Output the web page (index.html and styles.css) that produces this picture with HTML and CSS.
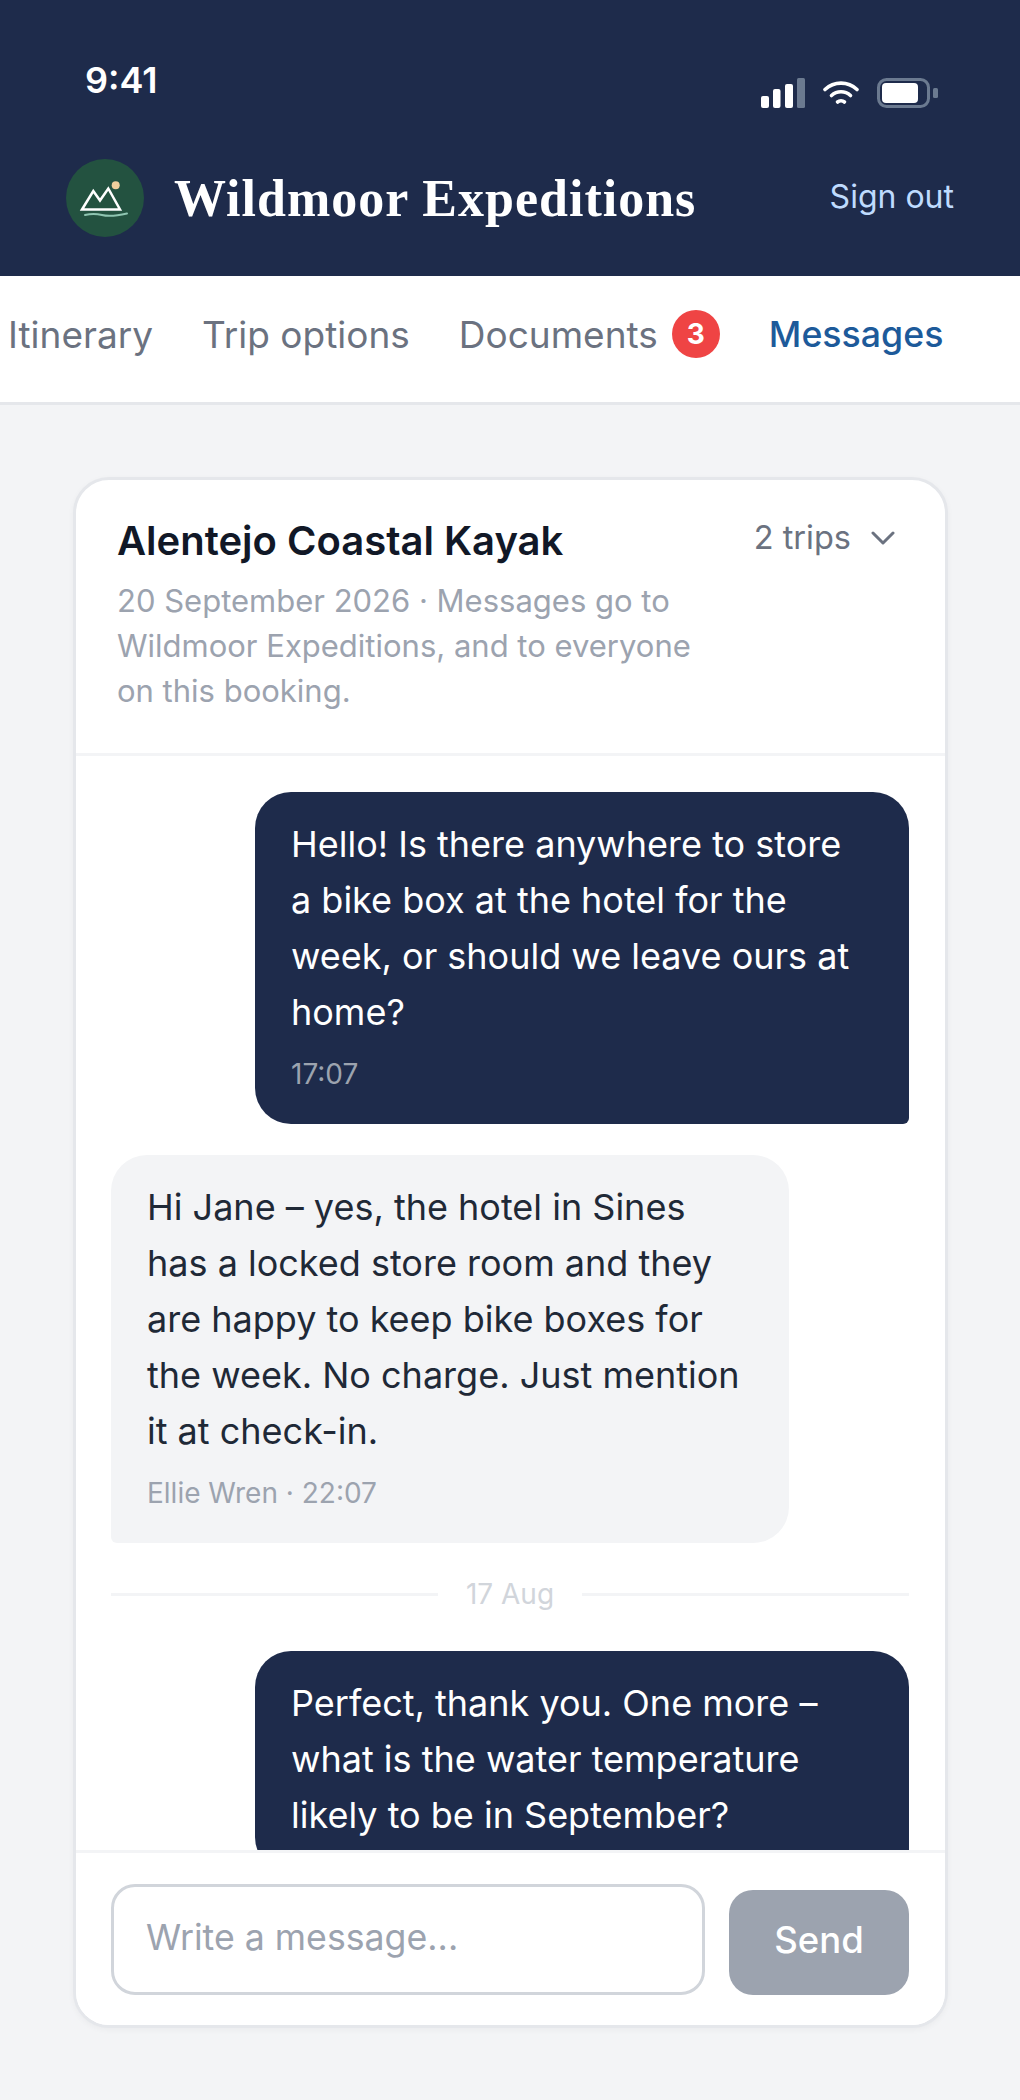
FILE: index.html
```html
<!DOCTYPE html>
<html lang="en">
<head>
  <meta charset="UTF-8">
  <meta name="viewport" content="width=device-width, initial-scale=1.0">
  <title>Messages - Wildmoor Expeditions</title>
  <link rel="stylesheet" href="styles.css">
</head>
<body>
  <header class="top">
    <div class="status">
      <span class="clock">9:41</span>
      <div class="status-icons">
        <svg class="signal" width="44" height="30" viewBox="0 0 44 30">
          <rect x="0" y="18" width="8" height="12" rx="2" fill="#fff"/>
          <rect x="12" y="11" width="7.5" height="19" rx="2" fill="#fff"/>
          <rect x="24" y="6" width="8" height="24" rx="2" fill="#fff"/>
          <rect x="36" y="0" width="8" height="30" rx="1.5" fill="#6b7a90"/>
        </svg>
        <svg class="wifi" width="36" height="24" viewBox="0 0 36 24" fill="none" stroke="#fff" stroke-width="3.6" stroke-linecap="round">
          <path d="M2 8.5C11 0 25 0 34 8.5"/>
          <path d="M8.5 14.5C14 9.5 22 9.5 27.5 14.5"/>
          <path d="M14.5 21C16.5 19.4 19.5 19.4 21.5 21"/>
        </svg>
        <svg class="battery" width="61" height="30" viewBox="0 0 61 30">
          <rect x="1.5" y="1.5" width="50" height="27" rx="8" fill="none" stroke="#6b7a90" stroke-width="3"/>
          <rect x="5" y="5" width="36" height="20" rx="4" fill="#fff"/>
          <rect x="56" y="10" width="5" height="10" rx="1.5" fill="#6b7a90"/>
        </svg>
      </div>
    </div>
    <div class="brand-row">
      <div class="brand">
        <svg class="logo" width="78" height="78" viewBox="0 0 78 78">
          <circle cx="39" cy="39" r="39" fill="#235240"/>
          <path d="M16 50.5L27.3 32L34 41.5L42.3 29.5L54 50.5Z" fill="none" stroke="#fff" stroke-width="2.5" stroke-linejoin="miter"/>
          <circle cx="49.7" cy="26.3" r="4" fill="#f0cf9d"/>
          <path d="M19 56C25 54.5 30 54.5 36 56S50 57 61 54.5" fill="none" stroke="#8fc5b1" stroke-width="2" stroke-linecap="round"/>
        </svg>
        <span class="brand-name">Wildmoor Expeditions</span>
      </div>
      <a class="signout" href="#">Sign out</a>
    </div>
  </header>

  <nav class="tabs">
    <a href="#">Itinerary</a>
    <a href="#">Trip options</a>
    <a href="#" class="has-badge">Documents <span class="badge">3</span></a>
    <a href="#" class="active">Messages</a>
  </nav>

  <main class="page">
    <section class="card">
      <div class="card-head">
        <div class="card-title-row">
          <h2>Alentejo Coastal Kayak</h2>
          <div class="trips">2 trips
            <svg width="24" height="14" viewBox="0 0 24 14" fill="none" stroke="#6b7280" stroke-width="3" stroke-linecap="round" stroke-linejoin="round"><path d="M2 2L12 12L22 2"/></svg>
          </div>
        </div>
        <p class="card-sub">20 September 2026 · Messages go to Wildmoor Expeditions, and to everyone on this booking.</p>
      </div>

      <div class="thread">
        <div class="msg msg-out">
          <p>Hello! Is there anywhere to store a bike box at the hotel for the week, or should we leave ours at home?</p>
          <span class="meta">17:07</span>
        </div>
        <div class="msg msg-in">
          <p>Hi Jane – yes, the hotel in Sines has a locked store room and they are happy to keep bike boxes for the week. No charge. Just mention it at check-in.</p>
          <span class="meta">Ellie Wren · 22:07</span>
        </div>
        <div class="day"><span>17 Aug</span></div>
        <div class="msg msg-out">
          <p>Perfect, thank you. One more – what is the water temperature likely to be in September?</p>
        </div>
      </div>

      <form class="composer">
        <input class="composer-input" type="text" placeholder="Write a message...">
        <button class="send" type="button">Send</button>
      </form>
    </section>
  </main>
</body>
</html>
```

FILE: styles.css
```css
* {
  box-sizing: border-box;
}
html, body {
  margin: 0;
  height: 2100px;
  overflow: hidden;
}
body {
  font-family: Inter, Arial, sans-serif;
  background-color: #f3f4f6;
  color: #111827;
}
.top {
  background-color: #1e2b4b;
  height: 276px;
  padding: 0 66px;
}
.status {
  display: flex;
  justify-content: space-between;
  height: 142px;
  padding: 58px 16px 0 19px;
}
.clock {
  font-weight: 600;
  font-size: 36px;
  line-height: 44px;
  color: #fff;
}
.status-icons {
  display: flex;
  align-items: flex-start;
  gap: 18px;
  padding-top: 20px;
}
.wifi {
  margin-top: 3px;
}
.brand-row {
  display: flex;
  justify-content: space-between;
  align-items: flex-start;
  padding-top: 17px;
}
.brand {
  display: flex;
  align-items: center;
  gap: 30px;
}
.brand-name {
  font-family: "Liberation Serif", serif;
  font-weight: 700;
  font-size: 52px;
  letter-spacing: 1px;
  color: #fff;
}
.signout {
  color: #bfdbfe;
  font-size: 32px;
  line-height: 44px;
  padding-top: 16px;
  text-decoration: none;
}
.tabs {
  display: flex;
  align-items: center;
  gap: 49px;
  height: 129px;
  padding: 0 8px 10px;
  background-color: #fff;
  border-bottom: 3px solid #e5e7eb;
  font-size: 37px;
}
.tabs a {
  color: #6b7280;
  text-decoration: none;
}
.tabs .active {
  color: #1d5a9a;
  font-size: 35.7px;
  font-weight: 500;
}
.has-badge {
  display: flex;
  align-items: center;
  gap: 14px;
}
.badge {
  display: inline-flex;
  justify-content: center;
  align-items: center;
  width: 48px;
  height: 48px;
  border-radius: 50%;
  background-color: #ef4444;
  color: #fff;
  font-size: 28px;
  font-weight: 700;
}
.page {
  padding: 72px 72px 0 73px;
}
.card {
  height: 1551px;
  display: flex;
  flex-direction: column;
  background-color: #fff;
  border: 3px solid #e5e7eb;
  border-radius: 36px;
  box-shadow: 0 2px 6px rgba(0, 0, 0, 0.04);
  overflow: hidden;
}
.card-head {
  height: 276px;
  flex: none;
  padding: 34px 50px 0 41px;
  border-bottom: 3px solid #f3f4f6;
}
.card-title-row {
  display: flex;
  justify-content: space-between;
  align-items: flex-start;
}
h2 {
  margin: 0;
  font-size: 40px;
  line-height: 54px;
  font-weight: 600;
}
.trips {
  display: flex;
  align-items: center;
  gap: 20px;
  padding-top: 2px;
  color: #6b7280;
  font-size: 32.5px;
  line-height: 44px;
}
.card-sub {
  margin: 10px 0 0;
  width: 600px;
  font-size: 31px;
  line-height: 45px;
  color: #9ca3af;
}
.thread {
  flex: 1;
  overflow: hidden;
  padding: 36px 36px 0 35px;
  display: flex;
  flex-direction: column;
  gap: 31px;
}
.msg {
  flex: none;
  padding: 24px 44px 30px 36px;
  font-size: 36px;
  line-height: 56px;
}
.msg p {
  margin: 0;
}
.msg-out {
  align-self: flex-end;
  width: 654px;
  background-color: #1e2b4b;
  color: #fff;
  border-radius: 36px 36px 6px 36px;
}
.msg-in {
  align-self: flex-start;
  width: 678px;
  background-color: #f3f4f6;
  color: #1f2937;
  border-radius: 36px 36px 36px 6px;
}
.meta {
  display: block;
  margin-top: 14px;
  font-size: 28px;
  line-height: 40px;
  color: #9ca3af;
}
.day {
  display: flex;
  flex: none;
  align-items: center;
  gap: 28px;
  margin-bottom: 6px;
  color: #d1d5db;
  font-size: 28px;
  line-height: 40px;
}
.day::before, .day::after {
  content: "";
  flex: 1;
  height: 3px;
  background-color: #f3f4f6;
}
.composer {
  flex: none;
  height: 175px;
  display: flex;
  align-items: flex-end;
  gap: 24px;
  padding: 0 36px 30px 35px;
  background-color: #fff;
  border-top: 3px solid #f3f4f6;
}
.composer-input {
  flex: 1;
  min-width: 0;
  height: 111px;
  padding: 0 32px 6px;
  border: 3px solid #d1d5db;
  border-radius: 24px;
  font-family: inherit;
  font-size: 35.7px;
}
.composer-input::placeholder {
  color: #9ca3af;
}
.send {
  width: 180px;
  height: 105px;
  padding-bottom: 6px;
  border: none;
  border-radius: 24px;
  background-color: #9ca3af;
  color: #fff;
  font-family: inherit;
  font-size: 36.5px;
  font-weight: 500;
}
```
